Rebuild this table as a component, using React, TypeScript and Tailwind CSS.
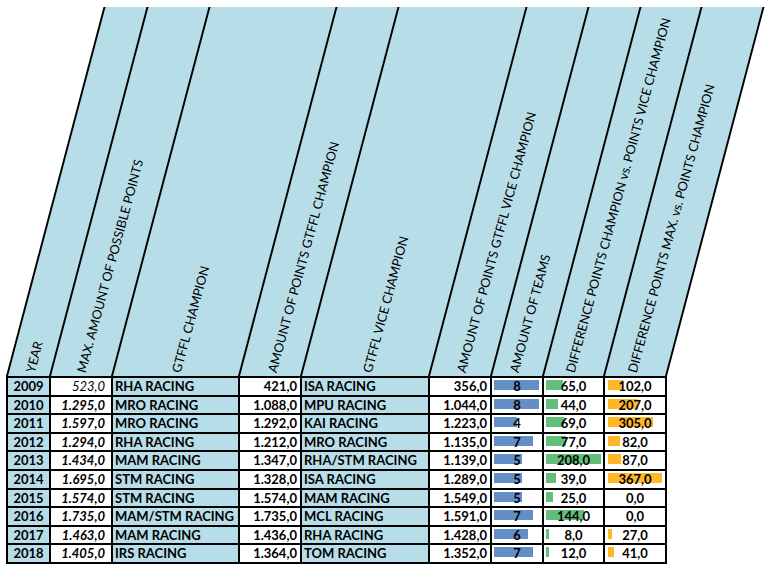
import React from "react";

type Row = {
  year: string;
  max: string;
  maxBold: boolean;
  champ: string;
  pts: string;
  vice: string;
  vpts: string;
  teams: number;
  diff: number;
  dmax: number;
};

const rows: Row[] = [
  { year: "2009", max: "523,0", maxBold: false, champ: "RHA RACING", pts: "421,0", vice: "ISA RACING", vpts: "356,0", teams: 8, diff: 65, dmax: 102 },
  { year: "2010", max: "1.295,0", maxBold: true, champ: "MRO RACING", pts: "1.088,0", vice: "MPU RACING", vpts: "1.044,0", teams: 8, diff: 44, dmax: 207 },
  { year: "2011", max: "1.597,0", maxBold: true, champ: "MRO RACING", pts: "1.292,0", vice: "KAI RACING", vpts: "1.223,0", teams: 4, diff: 69, dmax: 305 },
  { year: "2012", max: "1.294,0", maxBold: true, champ: "RHA RACING", pts: "1.212,0", vice: "MRO RACING", vpts: "1.135,0", teams: 7, diff: 77, dmax: 82 },
  { year: "2013", max: "1.434,0", maxBold: true, champ: "MAM RACING", pts: "1.347,0", vice: "RHA/STM RACING", vpts: "1.139,0", teams: 5, diff: 208, dmax: 87 },
  { year: "2014", max: "1.695,0", maxBold: true, champ: "STM RACING", pts: "1.328,0", vice: "ISA RACING", vpts: "1.289,0", teams: 5, diff: 39, dmax: 367 },
  { year: "2015", max: "1.574,0", maxBold: true, champ: "STM RACING", pts: "1.574,0", vice: "MAM RACING", vpts: "1.549,0", teams: 5, diff: 25, dmax: 0 },
  { year: "2016", max: "1.735,0", maxBold: true, champ: "MAM/STM RACING", pts: "1.735,0", vice: "MCL RACING", vpts: "1.591,0", teams: 7, diff: 144, dmax: 0 },
  { year: "2017", max: "1.463,0", maxBold: true, champ: "MAM RACING", pts: "1.436,0", vice: "RHA RACING", vpts: "1.428,0", teams: 6, diff: 8, dmax: 27 },
  { year: "2018", max: "1.405,0", maxBold: true, champ: "IRS RACING", pts: "1.364,0", vice: "TOM RACING", vpts: "1.352,0", teams: 7, diff: 12, dmax: 41 },
];

const fmt = (n: number) => `${n},0`;

const headers: { text: string; left: number }[] = [
  { text: "YEAR", left: 28 },
  { text: "MAX. AMOUNT OF POSSIBLE POINTS", left: 36 },
  { text: "GTFFL CHAMPION", left: 69 },
  { text: "AMOUNT OF POINTS GTFFL CHAMPION", left: 38 },
  { text: "GTFFL VICE CHAMPION", left: 71 },
  { text: "AMOUNT OF POINTS GTFFL VICE CHAMPION", left: 37 },
  { text: "AMOUNT OF TEAMS", left: 28 },
  { text: "DIFFERENCE POINTS CHAMPION vs. POINTS VICE CHAMPION", left: 32 },
  { text: "DIFFERENCE POINTS MAX. vs. POINTS CHAMPION", left: 33 },
];

const cols = "grid-cols-[41px_60px_125px_60px_126px_60px_50px_59px_60px]";

export default function App() {
  return (
    <div
      className="w-[770px] h-[571px] bg-white overflow-hidden pt-[7px] pl-[6px] text-black"
      style={{ fontFamily: "Lato, 'Open Sans', sans-serif" }}
    >
      {/* slanted header */}
      <div className={`grid ${cols} gap-x-[2px] px-[2px] bg-black h-[369px] w-[661px] origin-bottom-left -skew-x-[14.8deg]`}>
        {headers.map((h, i) => (
          <div key={i} className="relative bg-[#b7dee8]">
            <span
              className="absolute bottom-[2.5px] whitespace-nowrap text-[12.7px] leading-[14px] origin-bottom-left [transform:skewX(14.8deg)_rotate(-74.8deg)]"
              style={{ left: `${h.left}px` }}
            >
              {h.text}
            </span>
          </div>
        ))}
      </div>

      {/* table body */}
      <div className={`grid ${cols} auto-rows-[16.6px] gap-[2px] p-[2px] bg-black w-[661px] text-[13px] leading-[16.6px] font-bold`}>
        {rows.map((r) => (
          <React.Fragment key={r.year}>
            <div className="bg-[#b7dee8] text-center">{r.year}</div>
            <div className={`bg-white text-right pr-[6px] italic ${r.maxBold ? "font-bold" : "font-normal"}`}>{r.max}</div>
            <div className="bg-[#b7dee8] pl-[2px] whitespace-nowrap">{r.champ}</div>
            <div className="bg-white text-right pr-[3px]">{r.pts}</div>
            <div className="bg-[#b7dee8] pl-[2px] whitespace-nowrap">{r.vice}</div>
            <div className="bg-white text-right pr-[3px]">{r.vpts}</div>
            <div className="relative bg-white text-center">
              <div className="absolute top-[2px] left-[2px] h-[10px] bg-[#638ec6]" style={{ width: `${(r.teams / 8) * 45}px` }} />
              <span className="relative">{r.teams}</span>
            </div>
            <div className="relative bg-white text-center">
              {r.diff > 0 && (
                <div className="absolute top-[2px] left-[2px] h-[10px] bg-[#63be7b]" style={{ width: `${Math.max(2.5, (r.diff / 208) * 55)}px` }} />
              )}
              <span className="relative">{fmt(r.diff)}</span>
            </div>
            <div className="relative bg-white text-center">
              {r.dmax > 0 && (
                <div className="absolute top-[2px] left-[3px] h-[10px] bg-[#ffb628]" style={{ width: `${Math.max(3, (r.dmax / 367) * 54)}px` }} />
              )}
              <span className="relative">{fmt(r.dmax)}</span>
            </div>
          </React.Fragment>
        ))}
      </div>
    </div>
  );
}
